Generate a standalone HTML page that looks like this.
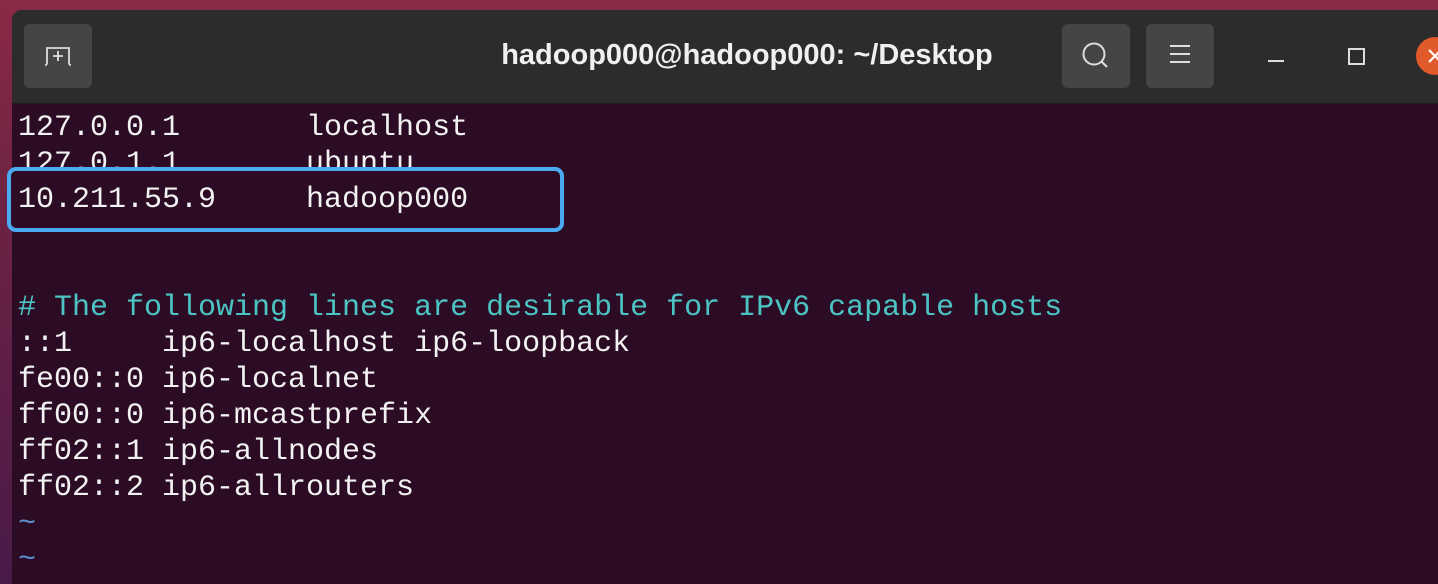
<!DOCTYPE html>
<html><head><style>
html,body{margin:0;padding:0;width:1438px;height:584px;overflow:hidden;background:#5a1f3a;}
body{position:relative;background:linear-gradient(180deg,#8a2a45 0%,#6a2244 40%,#4a1a48 100%);}
.win{position:absolute;left:12px;top:10px;width:1440px;height:600px;background:#2c0c24;border-radius:10px 0 0 0;overflow:hidden;}
.tb{position:absolute;left:0;top:0;right:0;height:93px;background:#2c2c2c;border-bottom:1px solid #1e1e1e;}
.btn{position:absolute;top:14px;width:68px;height:64px;background:#454545;border-radius:6px;}
.title{position:absolute;left:0;width:1470px;top:29px;text-align:center;color:#f0f0f0;font:bold 29px "Liberation Sans",sans-serif;}
.term{position:absolute;left:6px;top:100px;font:30px/36px "Liberation Mono",monospace;color:#f2f2f2;white-space:pre;}
.c{color:#4cc4c4}.t{color:#5d8ccf}
.box{position:absolute;left:7px;top:167px;width:549px;height:57px;border:4px solid #4aaaf2;border-radius:9px;}
</style></head><body>
<div class="win">
<div class="tb">
<div class="btn" style="left:12px"><svg width="68" height="64" viewBox="0 0 68 64"><path d="M21 41c2 0 2-1 2-3V24h22v14c0 2 0 3 2 3" fill="none" stroke="#ddd" stroke-width="1.8"/><path d="M34 27v10M29 32h10" stroke="#ddd" stroke-width="1.8"/></svg></div>
<div class="title">hadoop000@hadoop000: ~/Desktop</div>
<div class="btn" style="left:1050px"><svg width="68" height="64" viewBox="0 0 68 64"><circle cx="32" cy="30" r="10.5" fill="none" stroke="#ddd" stroke-width="2"/><path d="M39 37l6 6" stroke="#ddd" stroke-width="2.2"/></svg></div>
<div class="btn" style="left:1134px"><svg width="68" height="64" viewBox="0 0 68 64"><path d="M24 22h20M24 30h20M24 38h20" stroke="#ddd" stroke-width="2"/></svg></div>
<div style="position:absolute;left:1256px;top:50px;width:16px;height:2px;background:#ddd"></div>
<div style="position:absolute;left:1336px;top:38px;width:13px;height:13px;border:2px solid #ddd"></div>
<div style="position:absolute;left:1404px;top:27px;width:38px;height:38px;border-radius:50%;background:#e05a2b"><svg width="38" height="38" viewBox="0 0 38 38"><path d="M13 13l12 12M25 13L13 25" stroke="#fff" stroke-width="2.2"/></svg></div>
</div>
<div class="term">127.0.0.1       localhost
127.0.1.1       ubuntu
10.211.55.9     hadoop000


<span class="c"># The following lines are desirable for IPv6 capable hosts</span>
::1     ip6-localhost ip6-loopback
fe00::0 ip6-localnet
ff00::0 ip6-mcastprefix
ff02::1 ip6-allnodes
ff02::2 ip6-allrouters
<span class="t">~</span>
<span class="t">~</span></div>
</div>
<div class="box" style="background:#2c0c24;"></div>
<div style="position:absolute;left:18px;top:182px;font:30px/36px 'Liberation Mono',monospace;color:#f2f2f2;white-space:pre;">10.211.55.9     hadoop000</div>
</body></html>
